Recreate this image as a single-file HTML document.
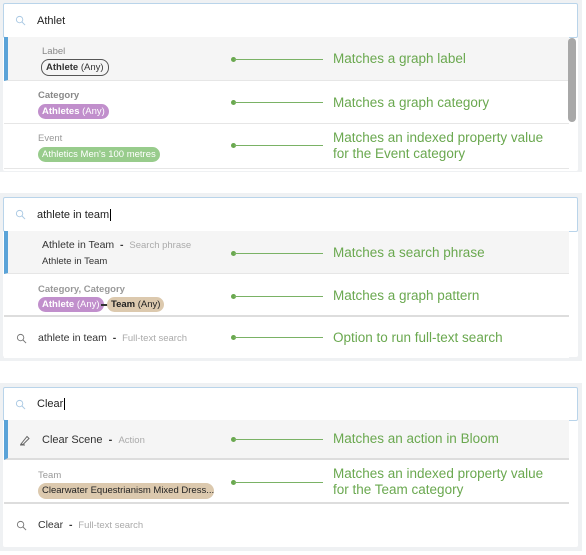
<!DOCTYPE html><html><head><style>
*{box-sizing:border-box;margin:0;padding:0}
body{width:586px;height:555px;background:#fff;font-family:"Liberation Sans",sans-serif;position:relative;overflow:hidden}
.a{position:absolute}
.frame{position:absolute;left:0;width:582px;background:#eff1f3}
.box{position:absolute;left:3px;width:575px;background:#fff;border:1.5px solid #b9d4ea;border-radius:2px;font-size:11px;color:#222}
.row{position:absolute;left:4px;width:565px;border-bottom:1px solid #e6e6e6;background:#fff}
.sel{background:#f5f5f5;border-left:4px solid #5aa3d8}
.dot{position:absolute;left:231px;width:5px;height:5px;border-radius:50%;background:#6aa84f}
.ln{position:absolute;left:234px;width:89px;height:1px;background:#7ab265}
.ann{position:absolute;left:333px;color:#6aa84f;font-size:13.5px;line-height:16px}
.lbl{position:absolute;font-size:9.5px;color:#999}
.pill{position:absolute;height:15px;border-radius:8px;font-size:9.5px;line-height:15px;padding:0 4px;white-space:nowrap}
.t{position:absolute;font-size:10.5px;color:#333;white-space:nowrap}
.g{color:#aaa;font-size:9.5px}
</style></head><body>
<svg width="0" height="0" style="position:absolute"><defs><symbol id="mg" viewBox="0 0 12 12"><circle cx="5" cy="5" r="3.5" fill="none" stroke="currentColor" stroke-width="1"/><path d="M7.5 7.5L11 11" stroke="currentColor" stroke-width="1"/></symbol></defs></svg>

<!-- panel 1 -->
<div class="frame" style="top:0;height:172px"></div>
<div class="box" style="top:3px;height:168px;border:none;background:#fff"></div>
<div class="box" style="top:3px;height:35px"></div>
<svg class="a" style="left:15px;top:15px;color:#a9c8e3" width="11" height="11"><use href="#mg"/></svg>
<div class="t" style="left:37px;top:15px;font-size:11px;color:#222">Athlet</div>
<div class="row sel" style="top:37px;height:44px"></div>
<div class="lbl" style="left:42px;top:46px;color:#888">Label</div>
<div class="pill" style="left:41px;top:59px;border:1.2px solid #555;color:#333;height:17px;line-height:15px"><b>Athlete</b> (Any)</div>
<div class="row" style="top:81px;height:43px"></div>
<div class="lbl" style="left:38px;top:90px;color:#888;font-weight:bold">Category</div>
<div class="pill" style="left:38px;top:104px;background:#c18fcc;color:#fff"><b>Athletes</b> (Any)</div>
<div class="row" style="top:124px;height:45px"></div>
<div class="lbl" style="left:38px;top:133px">Event</div>
<div class="pill" style="left:38px;top:147px;background:#98cc8c;color:#fff">Athletics Men's 100 metres</div>
<div class="a" style="left:568px;top:38px;width:8px;height:84px;background:#a8a8a8;border-radius:4px"></div>
<div class="dot" style="top:57px"></div><div class="ln" style="top:59px"></div><div class="ann" style="top:51px">Matches a graph label</div>
<div class="dot" style="top:100px"></div><div class="ln" style="top:102px"></div><div class="ann" style="top:95px">Matches a graph category</div>
<div class="dot" style="top:143px"></div><div class="ln" style="top:145px"></div><div class="ann" style="top:130px">Matches an indexed property value<br>for the Event category</div>

<!-- panel 2 -->
<div class="frame" style="top:193px;height:168px"></div>
<div class="box" style="top:197px;height:160px;border:none"></div>
<div class="box" style="top:197px;height:35px"></div>
<svg class="a" style="left:15px;top:209px;color:#a9c8e3" width="11" height="11"><use href="#mg"/></svg>
<div class="t" style="left:37px;top:209px;font-size:11px;color:#222">athlete in team<span style="border-left:1px solid #000;margin-left:1px"></span></div>
<div class="row sel" style="top:231px;height:43px"></div>
<div class="t" style="left:42px;top:239px">Athlete in Team &nbsp;<b>-</b>&nbsp; <span class="g">Search phrase</span></div>
<div class="t" style="left:42px;top:256px;font-size:9.5px">Athlete in Team</div>
<div class="row" style="top:274px;height:43px;border-bottom:2px solid #ddd"></div>
<div class="lbl" style="left:38px;top:284px;color:#999;font-weight:bold">Category, Category</div>
<div class="pill" style="left:38px;top:297px;background:#c18fcc;color:#fff"><b>Athlete</b> (Any)</div>
<div class="a" style="left:101px;top:304px;width:7px;height:2px;background:#333"></div>
<div class="pill" style="left:107px;top:297px;background:#dcc9ae;color:#222"><b>Team</b> (Any)</div>
<div class="row" style="top:318px;height:40px;border:none"></div>
<svg class="a" style="left:16px;top:333px;color:#777" width="11" height="11"><use href="#mg"/></svg>
<div class="t" style="left:38px;top:332px">athlete in team &nbsp;<b>-</b>&nbsp; <span class="g">Full-text search</span></div>
<div class="dot" style="top:251px"></div><div class="ln" style="top:253px"></div><div class="ann" style="top:245px">Matches a search phrase</div>
<div class="dot" style="top:294px"></div><div class="ln" style="top:296px"></div><div class="ann" style="top:288px">Matches a graph pattern</div>
<div class="dot" style="top:335px"></div><div class="ln" style="top:337px"></div><div class="ann" style="top:330px">Option to run full-text search</div>

<!-- panel 3 -->
<div class="frame" style="top:383px;height:168px"></div>
<div class="box" style="top:387px;height:160px;border:none"></div>
<div class="box" style="top:387px;height:34px"></div>
<svg class="a" style="left:15px;top:399px;color:#a9c8e3" width="11" height="11"><use href="#mg"/></svg>
<div class="t" style="left:37px;top:398px;font-size:11px;color:#222">Clear<span style="border-left:1px solid #000;margin-left:1px"></span></div>
<div class="row sel" style="top:420px;height:40px;border-bottom:2px solid #ddd"></div>
<svg class="a" style="left:19px;top:434px" width="12" height="12" viewBox="0 0 12 12"><path d="M2 10L8 2.5L10 4.5L4 10.5Z M1 11H6" fill="none" stroke="#666" stroke-width="1"/></svg>
<div class="t" style="left:42px;top:434px;font-size:11px">Clear Scene &nbsp;<b>-</b>&nbsp; <span class="g">Action</span></div>
<div class="row" style="top:461px;height:43px;border-bottom:2px solid #ddd"></div>
<div class="lbl" style="left:38px;top:470px">Team</div>
<div class="pill" style="left:38px;top:483px;background:#dcc9ae;color:#222;width:176px;height:16px">Clearwater Equestrianism Mixed Dress...</div>
<svg class="a" style="left:16px;top:520px;color:#777" width="11" height="11"><use href="#mg"/></svg>
<div class="t" style="left:38px;top:519px">Clear &nbsp;<b>-</b>&nbsp; <span class="g">Full-text search</span></div>
<div class="dot" style="top:437px"></div><div class="ln" style="top:439px"></div><div class="ann" style="top:431px">Matches an action in Bloom</div>
<div class="dot" style="top:480px"></div><div class="ln" style="top:482px"></div><div class="ann" style="top:466px">Matches an indexed property value<br>for the Team category</div>
</body></html>
